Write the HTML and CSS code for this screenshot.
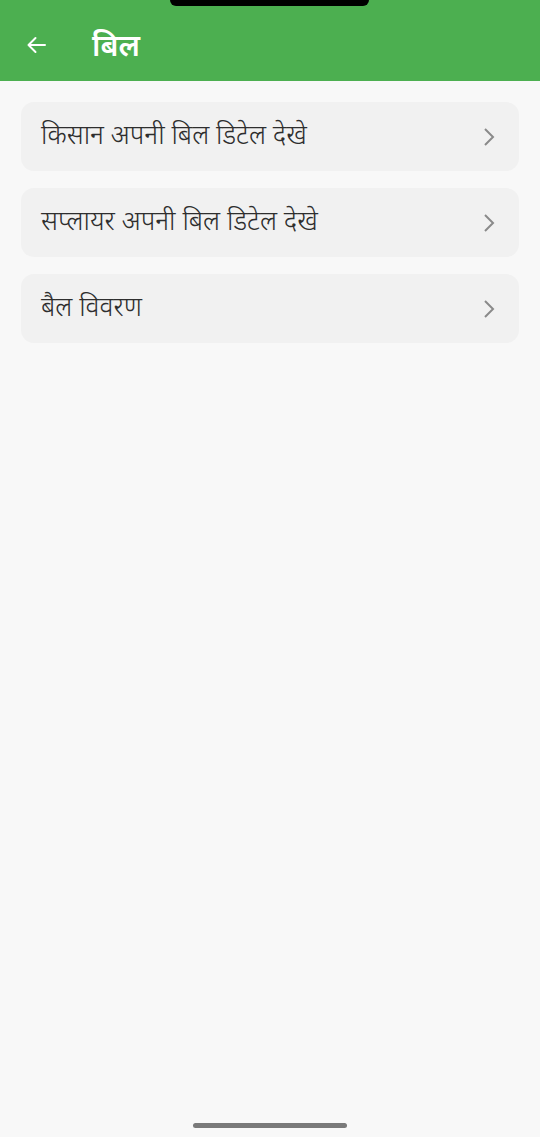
FILE: index.html
```html
<!DOCTYPE html>
<html lang="hi">
<head>
<meta charset="utf-8">
<link rel="stylesheet" href="styles.css">
</head>
<body>
<div class="screen">
  <header class="appbar">
    <div class="notch"></div>
    <svg class="back" width="24" height="24" viewBox="0 0 24 24"><path d="M21 12H4.5M11.5 5L4.5 12l7 7" fill="none" stroke="#fff" stroke-width="2" stroke-linecap="round" stroke-linejoin="round"/></svg>
    <h1 class="title">बिल</h1>
  </header>
  <main class="list">
    <div class="item"><span class="label">किसान अपनी बिल डिटेल देखे</span><svg class="chev" width="14" height="22" viewBox="0 0 14 22"><path d="M3 3l8 8-8 8" fill="none" stroke="#8a8a8a" stroke-width="2"/></svg></div>
    <div class="item"><span class="label">सप्लायर अपनी बिल डिटेल देखे</span><svg class="chev" width="14" height="22" viewBox="0 0 14 22"><path d="M3 3l8 8-8 8" fill="none" stroke="#8a8a8a" stroke-width="2"/></svg></div>
    <div class="item"><span class="label">बैल विवरण</span><svg class="chev" width="14" height="22" viewBox="0 0 14 22"><path d="M3 3l8 8-8 8" fill="none" stroke="#8a8a8a" stroke-width="2"/></svg></div>
  </main>
  <div class="home-bar"></div>
</div>
</body>
</html>
```
FILE: styles.css
```css
html, body {
  margin: 0;
  padding: 0;
  background: #f8f8f8;
}
.screen {
  width: 540px;
  height: 1137px;
  display: flex;
  flex-direction: column;
  position: relative;
  font-family: "Noto Sans", "Noto Sans Devanagari", "Lohit Devanagari", sans-serif;
}
.appbar {
  height: 81px;
  background: #4caf50;
  display: flex;
  align-items: center;
  padding: 8px 0 0 24px;
  box-sizing: border-box;
  position: relative;
}
.notch {
  position: absolute;
  top: 0;
  left: 170px;
  width: 199px;
  height: 6px;
  background: #000;
  border-radius: 0 0 10px 10px;
}
.back {
  display: block;
}
.title {
  margin: 0 0 0 44px;
  color: #fff;
  font-size: 30px;
  font-weight: 600;
  line-height: 1;
}
.list {
  display: flex;
  flex-direction: column;
  gap: 17px;
  padding: 21px 21px 0 21px;
}
.item {
  height: 69px;
  background: #f1f1f1;
  border-radius: 13px;
  display: flex;
  align-items: center;
  justify-content: space-between;
  padding: 0 23px 0 20px;
}
.label {
  font-size: 26.5px;
  font-weight: 300;
  color: #2e2e2e;
  line-height: 1;
  margin-top: -4px;
}
.chev {
  display: block;
}
.home-bar {
  position: absolute;
  left: 193px;
  bottom: 9px;
  width: 154px;
  height: 5px;
  border-radius: 3px;
  background: #7a7a7a;
}
```
